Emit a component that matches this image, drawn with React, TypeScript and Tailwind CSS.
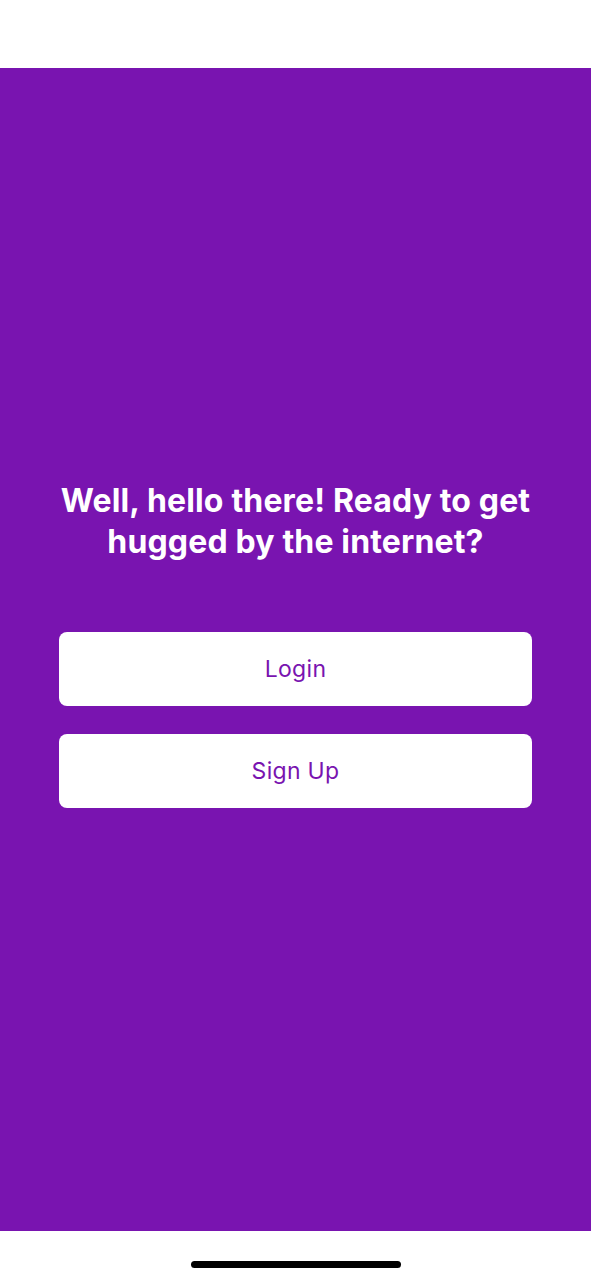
export default function App() {
  return (
    <div className="flex h-[1280px] w-full flex-col bg-white font-['Inter',sans-serif]">
      <div className="h-[68px] shrink-0 bg-white" />
      <main className="flex h-[1163px] shrink-0 flex-col bg-[#7914b0] px-[59px] pt-[412px]">
        <h1 className="text-center text-[32px] font-bold leading-[41px] tracking-[0.15px] text-white">
          Well, hello there! Ready to get hugged by the internet?
        </h1>
        <div className="mt-[70px] flex flex-col gap-[28px]">
          <button className="h-[74px] w-full rounded-lg bg-white text-[23px] tracking-[0.3px] text-[#7914b0]">
            Login
          </button>
          <button className="h-[74px] w-full rounded-lg bg-white text-[23px] tracking-[0.3px] text-[#7914b0]">
            Sign Up
          </button>
        </div>
      </main>
      <div className="flex flex-1 items-start justify-center bg-white pt-[30px]">
        <div className="h-[7px] w-[210px] rounded-full bg-black" />
      </div>
    </div>
  );
}
